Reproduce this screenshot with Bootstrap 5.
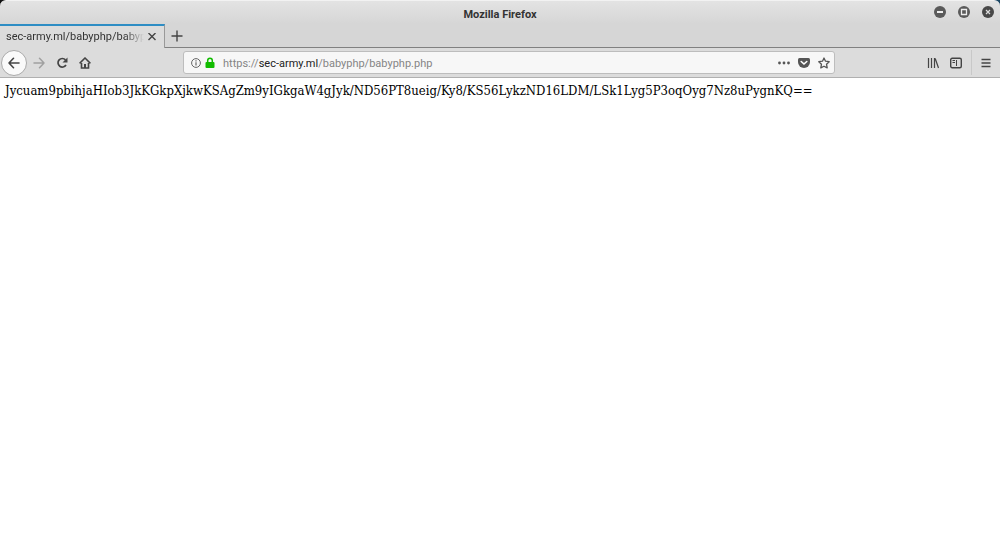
<!DOCTYPE html>
<html lang="en">
<head>
<meta charset="utf-8">
<meta name="viewport" content="width=device-width, initial-scale=1">
<title>Mozilla Firefox</title>
<link href="https://cdn.jsdelivr.net/npm/bootstrap@5.3.0/dist/css/bootstrap.min.css" rel="stylesheet">
<style>
body { font: 11px/16px Roboto, sans-serif; color: #333; }
svg { display: block; fill: none; stroke: #444; stroke-width: 2; }
button { padding: 0; border: 0; background: none; display: flex; align-items: center; justify-content: center; flex: none; }
.backdrop { background: linear-gradient(90deg, #111 50%, #1b4663 50%); }
.titlebar { height: 24px; border-radius: 6px 6px 0 0; border-top: 1px solid #f2f2f2; background: linear-gradient(#e3e3e3, #d6d6d6); }
.title-text { font-weight: 700; }
.window-buttons button { width: 24px; height: 22px; }
.tabstrip { height: 24px; background: #d6d6d6; border-bottom: 1px solid #818181; }
.browser-tab { width: 165px; height: 24px; padding-left: 6px; border-top: 2px solid #2e8dc4; border-right: 1px solid #999; background: #dcdcdc; }
.tab-label { width: 138px; color: #333; text-decoration: none; -webkit-mask-image: linear-gradient(90deg, #000 86%, transparent); mask-image: linear-gradient(90deg, #000 86%, transparent); }
.toolbar { height: 30px; padding-left: 1px; background: #dcdcdc; border-bottom: 1px solid #b0b0b0; }
.tool { width: 23px; height: 24px; }
.back { width: 26px; height: 26px; border: 1px solid #aaa; border-radius: 50%; background: #fafafa; }
.urlbar { margin: 0 86px 0 87px; padding-left: 7px; height: 23px; border: 1px solid #bdbdbd; border-radius: 3px; background: #f7f7f7; }
.urlbar input { width: 100%; height: 20px; padding: 0; border: 0; outline: 0; background: none; }
.url { inset: 3px 0 auto; color: #858585; pointer-events: none; }
.url b { color: #222; font-weight: 400; }
.menu { width: 29px; height: 25px; border-left: 1px solid #c8c8c8; }
.page-text { padding: 4px 5px; font: 13px/18px "DejaVu Serif Condensed", "DejaVu Serif", serif; color: #000; }
</style>
</head>
<body class="bg-white">
<div class="backdrop"><header class="titlebar d-flex align-items-center position-relative">
  <div class="title-text w-100 text-center pt-1">Mozilla Firefox</div>
  <div class="window-buttons position-absolute end-0 top-0 d-flex">
    <button aria-label="Minimize"><svg width="12" height="12"><circle cx="6" cy="6" r="6" fill="#5a5a5a" stroke="none"/><path d="M3 6h6" stroke="#eee"/></svg></button>
    <button aria-label="Maximize"><svg width="12" height="12"><circle cx="6" cy="6" r="6" fill="#5a5a5a" stroke="none"/><path d="M3.5 3.5h5v5h-5z" stroke="#eee" stroke-width="1.3"/></svg></button>
    <button aria-label="Close window"><svg width="12" height="12"><circle cx="6" cy="6" r="6" fill="#484848" stroke="none"/><path d="M4 4l4 4M8 4L4 8" stroke="#ddd" stroke-width="1.2"/></svg></button>
  </div>
</header></div>
<nav class="tabstrip d-flex" aria-label="Tabs">
  <div class="browser-tab d-flex align-items-center">
    <a href="#page" class="tab-label overflow-hidden text-nowrap">sec-army.ml/babyphp/babyphp.php</a>
    <button class="ms-1" aria-label="Close tab"><svg width="8" height="8"><path d="M.5 0l7 7M7.500 0l-7 7" stroke-width="1.400"/></svg></button>
  </div>
  <button class="tool" aria-label="New tab"><svg width="12" height="12"><path d="M6 .5v11M.5 6h11" stroke-width="1.400"/></svg></button>
</nav>
<div class="toolbar d-flex align-items-center">
  <button class="back" aria-label="Back"><svg width="12" height="12" stroke-linecap="round" stroke-linejoin="round"><path d="M11 6H1M5.500 1.300L1 6l4.500 4.700" stroke-width="1.600"/></svg></button>
  <button class="tool" aria-label="Forward"><svg width="12" height="12" stroke-linecap="round" stroke-linejoin="round"><path d="M1 6h10M6.500 1.300L11 6l-4.500 4.700" stroke="#a0a0a0" stroke-width="1.500"/></svg></button>
  <button class="tool" aria-label="Reload"><svg width="12" height="12"><path d="M9.500 2.900A4.300 4.300 0 1 0 10 8" stroke-width="1.700"/><path d="M11.500.5v5h-5z" fill="#444" stroke="none"/></svg></button>
  <button class="tool" aria-label="Home"><svg width="12" height="12"><path d="M.6 6.400L6 1l5.400 5.400" stroke-width="1.500"/><path d="M2.500 6v5h7V6" stroke-width="1.600"/><path d="M5 11V7h2v4z" fill="#444" stroke="none"/></svg></button>
  <div class="urlbar d-flex align-items-center flex-grow-1">
    <button aria-label="Site information"><svg width="10" height="10"><circle cx="5" cy="5" r="4.400" stroke="#666" stroke-width="1"/><path d="M5 4.300v3.200M5 2.300v1.200" stroke="#666" stroke-width="1.200"/></svg></button>
    <button class="ms-1 me-2" aria-label="Secure connection"><svg width="10" height="12"><path d="M2.700 6V3.500a2.300 2.300 0 0 1 4.600 0V6" stroke="#12bc00" stroke-width="1.500"/><rect x=".5" y="5" width="9" height="6" rx="1" fill="#12bc00" stroke="none"/></svg></button>
    <div class="position-relative flex-grow-1">
      <input id="address" type="text" aria-label="Address">
      <label for="address" class="url position-absolute text-nowrap">https://<b>sec-army.ml</b>/babyphp/babyphp.php</label>
    </div>
    <button aria-label="Page actions"><svg width="12" height="12"><g fill="#555" stroke="none"><circle cx="1.500" cy="6" r="1.400"/><circle cx="6" cy="6" r="1.400"/><circle cx="10.500" cy="6" r="1.400"/></g></svg></button>
    <button class="ms-2" aria-label="Save to Pocket"><svg width="12" height="12"><path d="M1.500 1h9q1.500 0 1.500 1.500V5a6 6 0 0 1-12 0V2.500Q0 1 1.500 1z" fill="#555" stroke="none"/><path d="M3.200 4.500L6 7l2.800-2.500" stroke="#fff" stroke-width="1.600" stroke-linecap="round"/></svg></button>
    <button class="ms-2 me-1" aria-label="Bookmark"><svg width="12" height="12"><path d="M6 1l1.500 3.200 3.700.5-2.700 2.500.7 3.700L6 9.200l-3.200 1.700.7-3.700L.8 4.700l3.700-.5z" stroke="#555" stroke-width="1.300" stroke-linejoin="round"/></svg></button>
  </div>
  <button class="tool" aria-label="Library"><svg width="12" height="12"><path d="M1.500 1v10M4.500 1v10M7.500 1v10M8.200 1.500l3.300 9.500" stroke-width="1.200"/></svg></button>
  <button class="tool me-1" aria-label="Sidebars"><svg width="12" height="12"><rect x=".7" y="1.200" width="10.600" height="9.600" rx="1.500" stroke-width="1.400"/><path d="M6.500 3v6" stroke-width="1"/><path d="M2.500 3.500H5M2.500 5.500H5" stroke-width="1"/></svg></button>
  <button class="menu" aria-label="Menu"><svg width="10" height="10"><path d="M.5 1.500h9M.5 5h9M.5 8.500h9" stroke-width="1.400"/></svg></button>
</div>
<main id="page" class="page-text text-break">Jycuam9pbihjaHIob3JkKGkpXjkwKSAgZm9yIGkgaW4gJyk/ND56PT8ueig/Ky8/KS56LykzND16LDM/LSk1Lyg5P3oqOyg7Nz8uPygnKQ==</main>
<script src="https://cdn.jsdelivr.net/npm/bootstrap@5.3.0/dist/js/bootstrap.bundle.min.js"></script>
</body>
</html>
